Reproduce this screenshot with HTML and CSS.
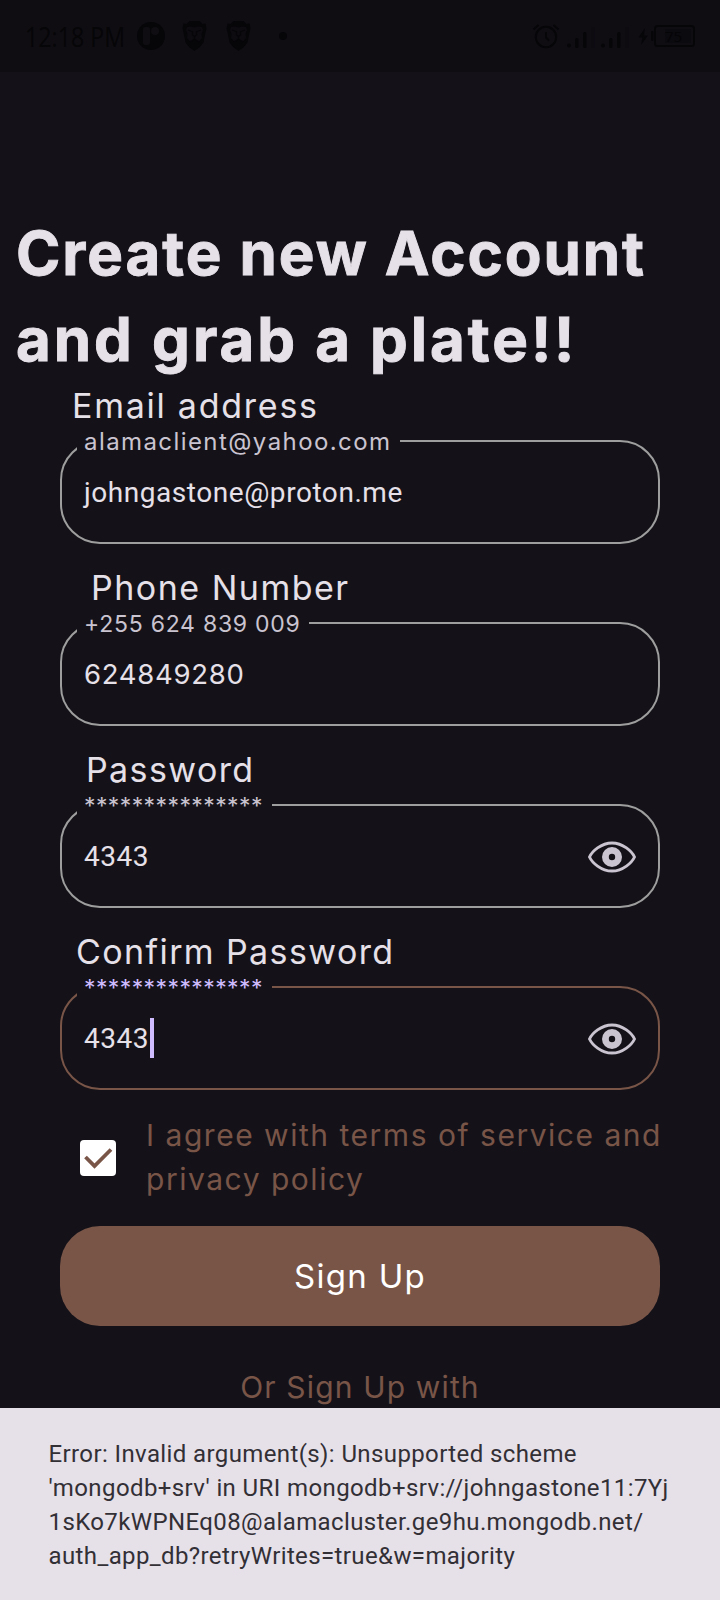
FILE: index.html
```html
<!DOCTYPE html>
<html lang="en">
<head>
<meta charset="utf-8">
<title>Create new Account</title>
<link rel="stylesheet" href="styles.css">
</head>
<body>
<svg class="defs" width="0" height="0">
  <symbol id="eye" viewBox="0 0 48 32">
    <path d="M1.500 16C4 10.500 13 2 24 2s20 8.500 22.500 14C44 21.500 35 30 24 30S4 21.500 1.500 16z" fill="none" stroke="#cac4d0" stroke-width="2.900"/>
    <circle cx="24" cy="16" r="6.600" fill="none" stroke="#cac4d0" stroke-width="6.800"/>
  </symbol>
  <symbol id="lion" viewBox="0 0 24 30">
    <path d="M7 0h10l3 3 3-.5 1 5-1 4-2 10-4 5-5 3.500-5-3.500-4-5L1 11.500l-1-4 1-5L4 3z" fill="#060508"/>
    <path d="M4.500 6l4-.5 3.500 1 3.500-1 4 .5 1 3-1.500 4 .5 4-3.500 4-4-2.500-4 2.500L4.500 17l.5-4-1.500-4z" fill="#0d0b10"/>
    <path d="M5.500 9l4 1.500M18.500 9l-4 1.500M10 10v4l2 1.500 2-1.500v-4M12 16v2.500M7.500 21l4.500-3 4.500 3" fill="none" stroke="#060508" stroke-width="1.200"/>
  </symbol>
</svg>
<div class="screen">
  <header class="status">
    <span class="time">12:18 PM</span>
    <svg class="app" width="28" height="28" viewBox="0 0 28 28"><circle cx="14" cy="14" r="14" fill="#060508"/><rect x="6" y="5" width="7" height="18" rx="2.500" fill="#0f0d12"/><circle cx="18" cy="9" r="4" fill="#0f0d12"/></svg>
    <svg class="lion" width="25" height="30"><use href="#lion"/></svg>
    <svg class="lion" width="25" height="30"><use href="#lion"/></svg>
    <i class="dot"></i>
    <svg class="system" width="164" height="26" viewBox="532 23 164 26">
      <g fill="none" stroke="#060508" stroke-width="2">
        <circle cx="546" cy="37" r="10.200"/><path d="M546 32v5.500l3 3M533.500 29.500l5-4.500M558.500 29.500l-5-4.500"/>
        <rect x="655" y="26" width="39" height="20" rx="2.500"/>
      </g>
      <g fill="#060508">
        <circle cx="569" cy="45.500" r="2"/><rect x="575" y="38" width="3.500" height="10" rx="1.500"/><rect x="583" y="32" width="3.500" height="16" rx="1.500"/>
        <circle cx="603" cy="45.500" r="2"/><rect x="609" y="38" width="3.500" height="10" rx="1.500"/><rect x="617" y="32" width="3.500" height="16" rx="1.500"/>
        <path d="M645 28l-6.500 9.500h4L641 45l7-9.500h-4z"/><rect x="651" y="31" width="2.500" height="10" rx="1"/>
      </g>
      <g fill="#0d0b10"><rect x="591" y="27" width="3.500" height="21"/><rect x="625" y="27" width="3.500" height="21"/></g>
      <rect x="665" y="29" width="26" height="14" fill="#0b0a0e"/>
      <text class="charge" x="665" y="42">75</text>
    </svg>
  </header>

  <main>
    <h1 class="title"><span class="title-first">Create new Account</span><br><span class="title-second">and grab a plate!!</span></h1>

    <section class="field email">
      <label class="label">Email address</label>
      <div class="box"><span class="float">alamaclient@yahoo.com</span><span class="value">johngastone@proton.me</span></div>
    </section>
    <section class="field phone">
      <label class="label">Phone Number</label>
      <div class="box"><span class="float">+255 624 839 009</span><span class="value">624849280</span></div>
    </section>
    <section class="field password">
      <label class="label">Password</label>
      <div class="box"><span class="float">***************</span><span class="value">4343</span><svg class="eye" width="48" height="32"><use href="#eye"/></svg></div>
    </section>
    <section class="field password confirm">
      <label class="label">Confirm Password</label>
      <div class="box"><span class="float">***************</span><span class="value">4343</span><i class="caret"></i><svg class="eye" width="48" height="32"><use href="#eye"/></svg></div>
    </section>

    <div class="agree">
      <svg class="check" width="36" height="36" viewBox="0 0 36 36"><rect width="36" height="36" rx="4" fill="#fff"/><path d="M5.500 17l9 9L31 9.500" fill="none" stroke="#795548" stroke-width="3.800"/></svg>
      <p class="terms">I agree with terms of service and<br>privacy policy</p>
    </div>
    <button class="signup">Sign Up</button>
    <p class="alt">Or Sign Up with</p>
  </main>

  <div class="snackbar">Error: Invalid argument(s): Unsupported scheme<br>'mongodb+srv' in URI mongodb+srv://johngastone11:7Yj<br>1sKo7kWPNEq08@alamacluster.ge9hu.mongodb.net/<br>auth_app_db?retryWrites=true&amp;w=majority</div>
</div>
</body>
</html>
```

FILE: styles.css
```css
* { box-sizing: border-box; }
body { margin: 0; background: #141218; font-family: Inter, sans-serif; color: #e6e0e9; }
.defs { position: absolute; }
.screen { position: relative; width: 720px; height: 1600px; overflow: hidden; }

.status { display: flex; align-items: center; height: 72px; padding-left: 25px; background: #0f0d12; }
.time { width: 112px; font: 27px/72px "Open Sans", sans-serif; white-space: nowrap; color: #060508; transform: translateY(1px) scaleX(.86); transform-origin: left; }
.lion { margin-left: 17px; }
.lion + .lion { margin-left: 19px; }
.dot { width: 8px; height: 8px; margin-left: 28px; border-radius: 50%; background: #060508; }
.system { margin: 0 24px 0 auto; }
.charge { font: 15px "Open Sans", sans-serif; fill: #050407; }

.title { height: 171px; margin: 138px 0 0 16px; font-size: 60px; line-height: 86px; font-weight: 700; -webkit-text-stroke: .9px #e6e0e9; white-space: nowrap; }
.title-first { letter-spacing: 1.95px; }
.title-second { letter-spacing: 2.95px; }

.field { height: 182px; margin: 0 60px; }
.label { display: block; height: 59px; font-size: 34px; line-height: 50px; letter-spacing: 1.5px; white-space: nowrap; }
.email .label { padding-left: 12px; letter-spacing: 1.75px; }
.phone .label { padding-left: 31px; }
.password .label { padding-left: 26px; letter-spacing: 1.4px; }
.confirm .label { padding-left: 16px; }

.box { position: relative; display: flex; align-items: center; height: 104px; padding: 0 22px 0 22px; border: 2px solid #9e9e9e; border-radius: 40px; }
.float { position: absolute; left: 15px; top: -15px; height: 30px; padding-left: 7px; background: #141218; font-size: 23px; line-height: 30px; color: #cac4d0; white-space: nowrap; }
.email .float { width: 323px; font-size: 24px; letter-spacing: 1.42px; }
.phone .float { width: 232px; letter-spacing: .75px; }
.password .float { width: 195px; letter-spacing: .4px; }
.value { padding-top: 2px; font: 28px/40px Roboto, sans-serif; letter-spacing: .55px; white-space: nowrap; }
.phone .value { padding-top: 0; font: 27.5px/40px Inter, sans-serif; letter-spacing: .72px; }
.eye { margin: 1px 0 0 auto; }
.confirm .box { border-color: #795548; }
.confirm .float { color: #cfbcff; }
.caret { width: 4px; height: 40px; margin-left: 1px; background: #cfbcff; }

.agree { display: flex; align-items: center; gap: 30px; height: 88px; margin: 4px 0 25px 80px; color: #795548; }
.check { margin-top: 2px; }
.terms { margin: 0; font-size: 30px; line-height: 44px; letter-spacing: 1.52px; white-space: nowrap; }
.signup { display: block; width: 600px; height: 100px; margin: 0 60px; padding: 0; border: 0; border-radius: 40px; background: #795548; color: #fff; font: 33px/100px Inter, sans-serif; letter-spacing: 1.29px; }
.alt { margin: 39px 0 0; text-align: center; color: #795548; font-size: 30px; line-height: 44px; letter-spacing: 1.15px; }

.snackbar { position: absolute; left: 0; right: 0; bottom: 0; height: 192px; padding: 29px 48.5px; background: #e6e0e9; color: #322f35; font: 24px/34px Roboto, sans-serif; letter-spacing: .39px; white-space: nowrap; }
```
